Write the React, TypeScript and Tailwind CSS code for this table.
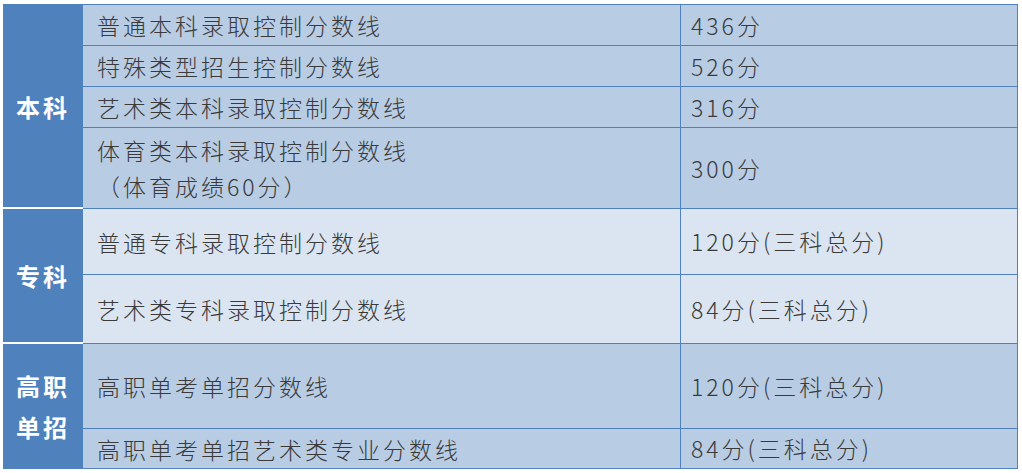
const font = { fontFamily: '"Noto Sans CJK SC", "Noto Sans", sans-serif' };

type Row = { name: string[]; score: string; h: string };

const sections: { label: string[]; rows: Row[] }[] = [
  {
    label: ['本科'],
    rows: [
      { name: ['普通本科录取控制分数线'], score: '436分', h: 'h-[41px]' },
      { name: ['特殊类型招生控制分数线'], score: '526分', h: 'h-[41px]' },
      { name: ['艺术类本科录取控制分数线'], score: '316分', h: 'h-[41px]' },
      { name: ['体育类本科录取控制分数线', '（体育成绩60分）'], score: '300分', h: 'h-[81px]' },
    ],
  },
  {
    label: ['专科'],
    rows: [
      { name: ['普通专科录取控制分数线'], score: '120分(三科总分)', h: 'h-[66px]' },
      { name: ['艺术类专科录取控制分数线'], score: '84分(三科总分)', h: 'h-[69px]' },
    ],
  },
  {
    label: ['高职', '单招'],
    rows: [
      { name: ['高职单考单招分数线'], score: '120分(三科总分)', h: 'h-[85px]' },
      { name: ['高职单考单招艺术类专业分数线'], score: '84分(三科总分)', h: 'h-[40px]' },
    ],
  },
];

export default function App() {
  return (
    <div className="w-[1022px] h-[473px] bg-white pt-[4px] pl-[3px]" style={font}>
      <div className="w-[1015px] border-t border-[#4f81bd]">
        {sections.map((s, si) => {
          const light = si === 1;
          return (
            <div key={si} className="flex">
              <div
                className={`w-[80px] bg-[#4f81bd] flex flex-col items-center justify-center text-white font-bold text-[24px] leading-[41px] tracking-[3px] ${
                  si < 2 ? 'border-b-2 border-white' : 'border-b border-[#4f81bd]'
                }`}
              >
                {s.label.map((l) => (
                  <div key={l}>{l}</div>
                ))}
              </div>
              <div className={`flex-1 flex flex-col ${light ? 'bg-[#dbe5f1]' : 'bg-[#b8cce4]'}`}>
                {s.rows.map((r, ri) => (
                  <div key={ri} className={`flex box-border border-b border-[#4f81bd] ${r.h}`}>
                    <div className="flex-1 flex flex-col justify-center pl-[14px] text-[23px] font-light leading-[36px] tracking-[3px] text-[#3a3a3a]">
                      {r.name.map((n) => (
                        <div key={n}>{n}</div>
                      ))}
                    </div>
                    <div className="w-[338px] border-l border-r border-[#4f81bd] flex items-center pl-[10px] text-[23px] font-light tracking-[3px] text-[#3a3a3a]">
                      {r.score}
                    </div>
                  </div>
                ))}
              </div>
            </div>
          );
        })}
      </div>
    </div>
  );
}
